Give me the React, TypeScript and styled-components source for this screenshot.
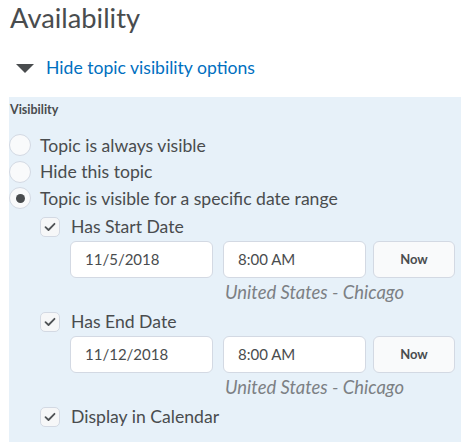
import React from "react";
import styled, { createGlobalStyle } from "styled-components";

const Global = createGlobalStyle`
  html, body { margin: 0; padding: 0; background: #ffffff; }
  body { font-family: Lato, "Open Sans", sans-serif; color: #494c4e; }
`;

const Page = styled.div`
  padding-left: 9px;
  width: 452px;
`;

const Title = styled.h2`
  margin: 0;
  padding: 1px 0 0 1px;
  font-size: 27.3px;
  font-weight: 400;
  line-height: 34px;
  color: #494c4e;
`;

const Toggle = styled.div`
  display: flex;
  align-items: center;
  gap: 12px;
  margin-top: 17px;
  padding-left: 7px;
  height: 32px;
`;

const Triangle = styled.span`
  width: 0;
  height: 0;
  border-left: 9px solid transparent;
  border-right: 9px solid transparent;
  border-top: 9px solid #494c4e;
`;

const Link = styled.a`
  font-size: 17.6px;
  color: #006fbf;
  text-decoration: none;
  line-height: 20px;
`;

const Panel = styled.div`
  margin-top: 13px;
  background: #e7f1f9;
  padding: 5px 0 16px 0;
`;

const GroupLabel = styled.div`
  font-size: 12.5px;
  font-weight: 700;
  line-height: 16px;
  padding-left: 1px;
  color: #494c4e;
`;

const RadioList = styled.div`
  margin-top: 14px;
  display: flex;
  flex-direction: column;
`;

const RadioRow = styled.label`
  display: flex;
  align-items: center;
  gap: 9px;
  height: 26.5px;
  font-size: 17.6px;
`;

const RadioCircle = styled.span<{ $checked?: boolean }>`
  box-sizing: border-box;
  width: 22px;
  height: 22px;
  border-radius: 50%;
  border: 1px solid #d3d9e3;
  background: #f9fafb;
  display: flex;
  align-items: center;
  justify-content: center;
  flex: none;
  &::after {
    content: "";
    display: ${(p) => (p.$checked ? "block" : "none")};
    width: 9px;
    height: 9px;
    border-radius: 50%;
    background: #494c4e;
  }
`;

const Sub = styled.div`
  padding-left: 31px;
  margin-top: 3px;
  display: flex;
  flex-direction: column;
`;

const CheckRow = styled.label`
  display: flex;
  align-items: center;
  gap: 11px;
  height: 24px;
  font-size: 17.6px;
`;

const CheckBox = styled.span`
  box-sizing: border-box;
  width: 20px;
  height: 20px;
  border-radius: 5px;
  border: 1px solid #d3d9e3;
  background: #f6f7f8;
  display: flex;
  align-items: center;
  justify-content: center;
  flex: none;
`;

const DateBlock = styled.div`
  padding-left: 30px;
  margin-top: 2px;
  margin-bottom: 7.5px;
  display: flex;
  flex-direction: column;
`;

const InputsRow = styled.div`
  display: flex;
  align-items: center;
`;

const Field = styled.div<{ $gap?: number }>`
  box-sizing: border-box;
  width: 143px;
  height: 37px;
  border: 1px solid #d3d9e3;
  border-radius: 6px;
  background: #ffffff;
  display: flex;
  align-items: center;
  padding-left: 14px;
  font-size: 15px;
  color: #494c4e;
  margin-right: ${(p) => p.$gap ?? 0}px;
`;

const NowButton = styled.button`
  box-sizing: border-box;
  width: 82px;
  height: 37px;
  border: 1px solid #d3d9e3;
  border-radius: 6px;
  background: #f9fafb;
  font-family: Lato, sans-serif;
  font-weight: 700;
  font-size: 13px;
  color: #494c4e;
  padding: 0;
`;

const Zone = styled.div`
  padding-left: 155px;
  margin-top: 4.5px;
  font-size: 18.4px;
  font-style: italic;
  color: #7c8084;
  line-height: 20px;
`;

const Check = () => (
  <svg width="12" height="10" viewBox="0 0 12 10">
    <path d="M1.5 5.2 L4.5 8 L10.5 1.8" fill="none" stroke="#505356" strokeWidth="1.8" strokeLinecap="round" strokeLinejoin="round" />
  </svg>
);

const DateRow = ({ date }: { date: string }) => (
  <DateBlock>
    <InputsRow>
      <Field $gap={10}>{date}</Field>
      <Field $gap={7}>8:00 AM</Field>
      <NowButton>Now</NowButton>
    </InputsRow>
    <Zone>United States - Chicago</Zone>
  </DateBlock>
);

export default function App() {
  return (
    <>
      <Global />
      <Page>
        <Title>Availability</Title>
        <Toggle>
          <Triangle />
          <Link href="#">Hide topic visibility options</Link>
        </Toggle>
        <Panel>
          <GroupLabel>Visibility</GroupLabel>
          <RadioList>
            <RadioRow><RadioCircle />Topic is always visible</RadioRow>
            <RadioRow><RadioCircle />Hide this topic</RadioRow>
            <RadioRow><RadioCircle $checked />Topic is visible for a specific date range</RadioRow>
          </RadioList>
          <Sub>
            <CheckRow><CheckBox><Check /></CheckBox>Has Start Date</CheckRow>
            <DateRow date="11/5/2018" />
            <CheckRow><CheckBox><Check /></CheckBox>Has End Date</CheckRow>
            <DateRow date="11/12/2018" />
            <CheckRow><CheckBox><Check /></CheckBox>Display in Calendar</CheckRow>
          </Sub>
        </Panel>
      </Page>
    </>
  );
}
